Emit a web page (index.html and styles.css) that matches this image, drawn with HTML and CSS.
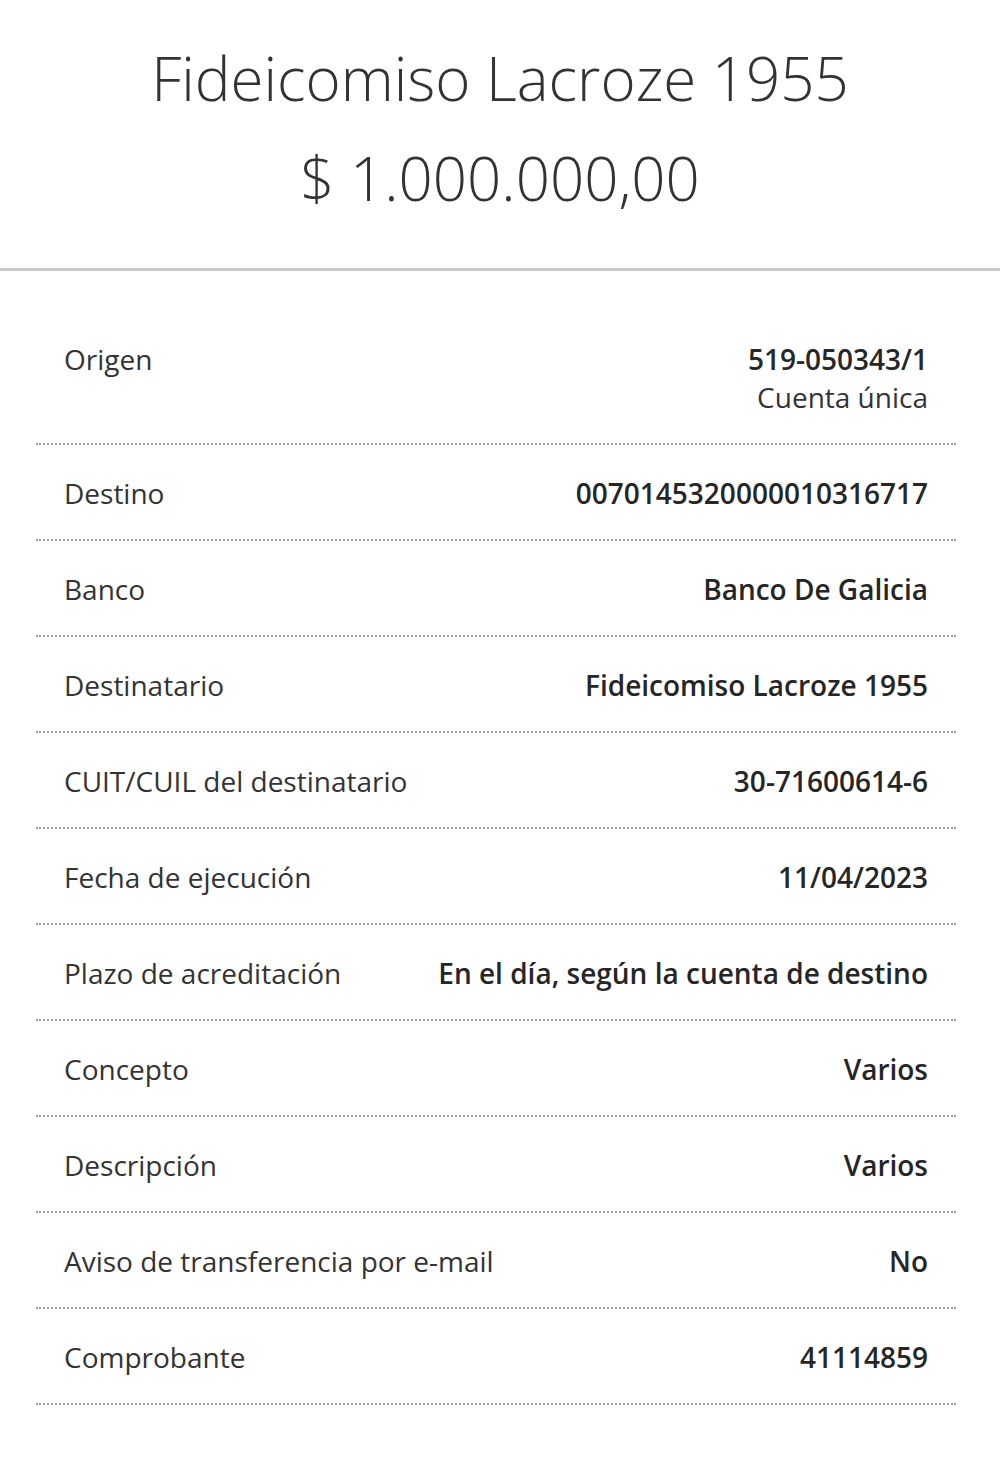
FILE: index.html
```html
<!DOCTYPE html>
<html lang="es">
<head>
<meta charset="utf-8">
<title>Transferencia</title>
<link rel="stylesheet" href="styles.css">
</head>
<body>
<header class="summary">
  <h1 class="summary-title">Fideicomiso Lacroze 1955</h1>
  <p class="summary-amount">$ 1.000.000,00</p>
</header>
<main class="details">
  <div class="row">
    <div class="label">Origen</div>
    <div class="value"><strong>519-050343/1</strong><span class="sub">Cuenta única</span></div>
  </div>
  <div class="row">
    <div class="label">Destino</div>
    <div class="value"><strong>0070145320000010316717</strong></div>
  </div>
  <div class="row">
    <div class="label">Banco</div>
    <div class="value"><strong>Banco De Galicia</strong></div>
  </div>
  <div class="row">
    <div class="label">Destinatario</div>
    <div class="value"><strong>Fideicomiso Lacroze 1955</strong></div>
  </div>
  <div class="row">
    <div class="label">CUIT/CUIL del destinatario</div>
    <div class="value"><strong>30-71600614-6</strong></div>
  </div>
  <div class="row">
    <div class="label">Fecha de ejecución</div>
    <div class="value"><strong>11/04/2023</strong></div>
  </div>
  <div class="row">
    <div class="label">Plazo de acreditación</div>
    <div class="value"><strong>En el día, según la cuenta de destino</strong></div>
  </div>
  <div class="row">
    <div class="label">Concepto</div>
    <div class="value"><strong>Varios</strong></div>
  </div>
  <div class="row">
    <div class="label">Descripción</div>
    <div class="value"><strong>Varios</strong></div>
  </div>
  <div class="row">
    <div class="label">Aviso de transferencia por e-mail</div>
    <div class="value"><strong>No</strong></div>
  </div>
  <div class="row">
    <div class="label">Comprobante</div>
    <div class="value"><strong>41114859</strong></div>
  </div>
</main>
</body>
</html>
```
FILE: styles.css
```css
html, body {
  margin: 0;
  padding: 0;
  background: #ffffff;
}

body {
  font-family: "Open Sans", "Liberation Sans", sans-serif;
  color: #333333;
}

.summary {
  text-align: center;
  padding: 28px 0 40px;
  border-bottom: 3px solid #c8c8c8;
}

.summary-title,
.summary-amount {
  margin: 0;
  font-size: 60px;
  font-weight: 300;
  line-height: 100px;
  color: #333333;
}

.details {
  margin: 0 44px 0 36px;
  padding-top: 40px;
}

.row {
  display: flex;
  justify-content: space-between;
  align-items: flex-start;
  gap: 24px;
  padding: 29px 28px 27px;
  border-bottom: 2px dotted #9a9a9a;
  font-size: 28px;
  line-height: 38px;
}

.label {
  color: #333333;
  white-space: nowrap;
}

.value {
  display: flex;
  flex-direction: column;
  align-items: flex-end;
  text-align: right;
  white-space: nowrap;
}

.value strong {
  font-weight: 600;
  color: #262626;
}

.value .sub {
  font-weight: 400;
  color: #333333;
}
```
